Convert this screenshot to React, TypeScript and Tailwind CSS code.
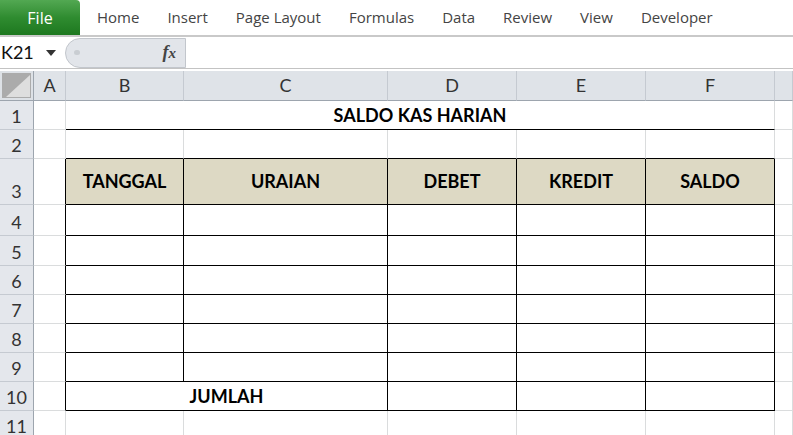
import React from "react";

type Cell = {
  text?: string;
  span?: number;
  bold?: boolean;
  fill?: boolean;
  rightBlack?: boolean;
  bottomBlack?: boolean;
};

const COLS = ["A", "B", "C", "D", "E", "F", "G"];
const TABS = ["Home", "Insert", "Page Layout", "Formulas", "Data", "Review", "View", "Developer"];
const ROW_HEIGHTS = ["h-[29px]", "h-[29px]", "h-[46px]", "h-[31px]", "h-[30px]", "h-[29px]", "h-[29px]", "h-[29px]", "h-[29px]", "h-[29px]", "h-[29px]"];

// build the sheet rows: index 0 = row 1
const buildRow = (r: number): Cell[] => {
  const inTable = r >= 3 && r <= 10;
  if (r === 1) {
    return [
      {},
      { text: "SALDO KAS HARIAN", span: 5, bold: true, bottomBlack: true },
      {},
    ];
  }
  if (r === 10) {
    return [
      { rightBlack: true },
      { text: "JUMLAH", span: 2, bold: true, rightBlack: true, bottomBlack: true },
      { rightBlack: true, bottomBlack: true },
      { rightBlack: true, bottomBlack: true },
      { rightBlack: true, bottomBlack: true },
      {},
    ];
  }
  const headers = ["TANGGAL", "URAIAN", "DEBET", "KREDIT", "SALDO"];
  return COLS.map((_, c) => {
    if (c === 0) return { rightBlack: inTable };
    if (c === 6) return {};
    return {
      text: r === 3 ? headers[c - 1] : undefined,
      bold: r === 3,
      fill: r === 3,
      rightBlack: inTable,
      bottomBlack: r >= 2 && r <= 9,
    };
  });
};

const SheetCell = ({ cell }: { cell: Cell }) => (
  <div
    className={`flex items-center justify-center border-r border-b text-[18px] text-black ${
      cell.rightBlack ? "border-r-black" : "border-r-[#dadcdd]"
    } ${cell.bottomBlack ? "border-b-black" : "border-b-[#dadcdd]"} ${
      cell.fill ? "bg-[#ddd9c4]" : "bg-white"
    } ${cell.bold ? "font-bold" : ""} ${
      cell.span === 5 ? "col-span-5" : cell.span === 2 ? "col-span-2" : ""
    }`}
  >
    {cell.text}
  </div>
);

const App = () => {
  return (
    <div className="w-[793px] h-[435px] overflow-hidden bg-white font-['Lato',sans-serif]">
      {/* Ribbon tabs */}
      <div className="flex h-[37px] items-start border-b-2 border-[#c9c9c9] font-['Open_Sans',sans-serif]">
        <div className="flex h-[35px] w-[80px] items-center justify-center rounded-tr-[4px] bg-linear-to-b from-[#52a852] via-[#2f8c30] to-[#1d781f] text-[16px] text-white">
          File
        </div>
        <div className="ml-[17px] flex h-[35px] items-center gap-[28px] text-[15px] text-[#444]">
          {TABS.map((t) => (
            <span key={t}>{t}</span>
          ))}
        </div>
      </div>

      {/* Formula bar */}
      <div className="flex h-[32px] items-center border-b border-[#c3c3c3]">
        <div className="flex w-[65px] items-center">
          <span className="pl-[1px] text-[18px] text-[#111]">K21</span>
          <svg width="10" height="6" viewBox="0 0 10 6" className="ml-[12px]">
            <path d="M0 0 L10 0 L5 6 Z" fill="#333" />
          </svg>
        </div>
        <div className="flex h-[30px] w-[121px] items-center rounded-l-full border border-[#c2c6cc] bg-[#e2e5ea]">
          <div className="ml-[8px] h-[5px] w-[6px] rounded-full bg-[#c9cdd2]" />
          <span className="ml-auto mr-[9px] font-['Liberation_Serif',serif] text-[18px] font-bold italic text-[#444]">
            f<span className="text-[15px]">x</span>
          </span>
        </div>
        <div className="flex-1" />
      </div>

      {/* Sheet */}
      <div className="mt-[2px] grid grid-cols-[34px_32px_118px_204px_129px_129px_129px_1fr]">
        {/* header row */}
        <div className="h-[30px] border-r border-b border-r-[#9da5ae] border-b-[#9da5ae] bg-[#dde1e6] p-[2px]">
          <svg width="29" height="25" viewBox="0 0 29 25">
            <rect width="29" height="25" fill="#ababab" />
            <path d="M28 2 L28 24 L4 24 Z" fill="#dedede" />
          </svg>
        </div>
        {COLS.map((c) => (
          <div
            key={c}
            className="flex h-[30px] items-center justify-center border-r border-b border-r-[#c5cad1] border-b-[#9da5ae] bg-[#dfe3e8] text-[18px] text-[#333]"
          >
            {c === "G" ? "" : c}
          </div>
        ))}

        {ROW_HEIGHTS.map((h, i) => {
          const r = i + 1;
          const cells = r === 11 ? COLS.map(() => ({} as Cell)) : buildRow(r);
          return (
            <React.Fragment key={r}>
              <div
                className={`${h} flex items-end justify-center border-r border-b border-r-[#9da5ae] border-b-[#c5cad1] bg-[#e4e7ec] text-[18px] leading-[26px] text-[#333]`}
              >
                {r}
              </div>
              {cells.map((cell, j) => (
                <SheetCell key={j} cell={cell} />
              ))}
            </React.Fragment>
          );
        })}
      </div>
    </div>
  );
};

export default App;
